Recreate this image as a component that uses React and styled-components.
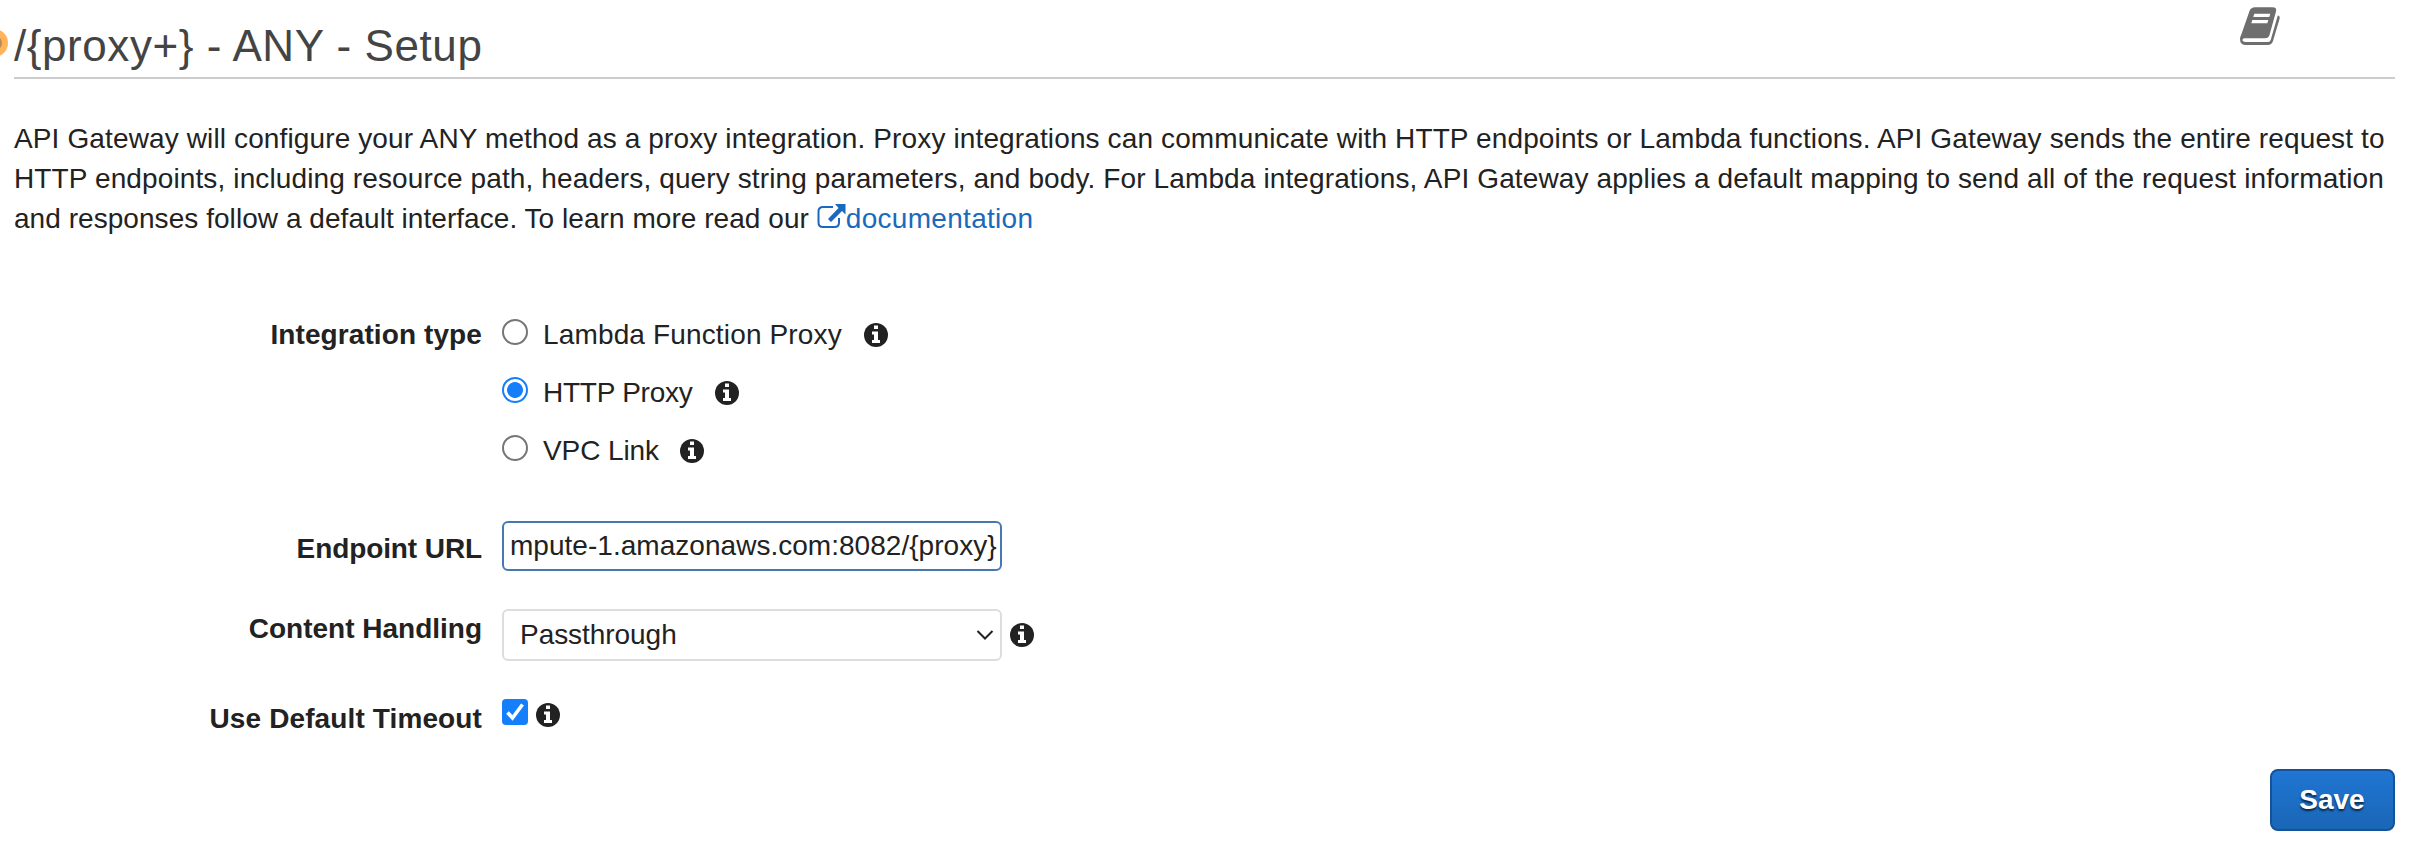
import React from "react";
import styled, { createGlobalStyle } from "styled-components";

const GlobalStyle = createGlobalStyle`
  * { box-sizing: border-box; }
  body {
    margin: 0;
    background: #fff;
    color: #222;
    font: 28px/40px "Liberation Sans", Arial, sans-serif;
    overflow: hidden;
  }
`;

const Page = styled.main`
  position: relative;
  height: 858px;
  padding: 18px 27px 0 14px;
  overflow: hidden;
`;

const StatusDot = styled.span`
  position: absolute;
  left: -20px;
  top: 29px;
  width: 28px;
  height: 28px;
  border-radius: 50%;
  border: 6px solid #ffb45c;
  background: #b98b52;
`;

const Header = styled.header`
  display: flex;
  justify-content: space-between;
  height: 61px;
  border-bottom: 2px solid #ccc;
`;

const Title = styled.h1`
  margin: 2px 0 0;
  font-size: 44px;
  line-height: 52px;
  font-weight: 400;
  color: #444;
  white-space: nowrap;
  letter-spacing: 0.57px;
`;

const BookIcon = styled.svg`
  width: 42px;
  height: 40px;
  margin: -12px 114px 0 0;
`;

const Intro = styled.p`
  margin: 40px 0 0;
`;

const Line = styled.span`
  display: block;
  white-space: nowrap;
  letter-spacing: ${(p) => p.$spacing || 0}px;
`;

const DocLink = styled.a`
  color: #1a69bc;
  text-decoration: none;
  letter-spacing: 0.3px;
`;

const ExternalIcon = styled.svg`
  width: 29px;
  height: 25px;
  vertical-align: -1px;
`;

const Form = styled.form`
  display: flex;
  flex-direction: column;
  margin-top: 76px;
`;

const Field = styled.div`
  display: grid;
  grid-template-columns: 468px auto;
  column-gap: 20px;
  justify-content: start;
  align-items: start;
  height: ${(p) => p.$height}px;
`;

const Label = styled.label`
  padding-top: ${(p) => p.$top || 0}px;
  text-align: right;
  font-weight: 700;
  white-space: nowrap;
  letter-spacing: ${(p) => p.$spacing || 0}px;
`;

const Options = styled.div`
  display: flex;
  flex-direction: column;
`;

const Option = styled.label`
  display: flex;
  height: 58px;
  align-items: flex-start;
`;

const Radio = styled.input`
  appearance: none;
  flex: none;
  width: 26px;
  height: 26px;
  margin: 4px 15px 0 0;
  border: 2px solid #767676;
  border-radius: 50%;
  background: #fff;
  &:checked {
    border-color: #157efb;
    background: radial-gradient(circle, #157efb 7.5px, #fff 8.3px);
  }
`;

const OptionText = styled.span`
  width: ${(p) => p.$width}px;
  white-space: nowrap;
  letter-spacing: ${(p) => p.$spacing || 0}px;
`;

const InfoSvg = styled.svg`
  flex: none;
  width: 24px;
  height: 24px;
  margin: ${(p) => p.$top}px 0 0 ${(p) => p.$left || 0}px;
`;

const Controls = styled.div`
  display: flex;
  align-items: flex-start;
`;

const TextInput = styled.input`
  width: 500px;
  height: 50px;
  padding: 0 0 0 6px;
  border: 2px solid #4679b2;
  border-radius: 6px;
  outline: none;
  color: #222;
  background: #fff;
  font: inherit;
  letter-spacing: 0.03px;
`;

const SelectBox = styled.button`
  display: flex;
  align-items: center;
  justify-content: space-between;
  width: 500px;
  height: 52px;
  padding: 0 6px 0 16px;
  border: 2px solid #ddd;
  border-radius: 6px;
  color: #222;
  background: #fff;
  font: inherit;
  letter-spacing: -0.05px;
`;

const Chevron = styled.svg`
  width: 18px;
  height: 12px;
`;

const CheckBox = styled.span`
  display: flex;
  width: 26px;
  height: 26px;
  border-radius: 4px;
  background: #157efb;
`;

const Actions = styled.div`
  display: flex;
  justify-content: flex-end;
`;

const SaveButton = styled.button`
  width: 125px;
  height: 62px;
  padding: 0 1px 0 0;
  border: 2px solid #14529a;
  border-radius: 8px;
  color: #fff;
  background: linear-gradient(#1f76d3, #1a66b6);
  font: 700 28px/40px "Liberation Sans", Arial, sans-serif;
  text-shadow: 0 2px 2px rgba(0, 0, 0, 0.65);
`;

function Info({ top, left }) {
  return (
    <InfoSvg viewBox="0 0 24 24" $top={top} $left={left}>
      <circle cx="12" cy="12" r="12" fill="#222" />
      <path d="M10 2.500h4v3.500h-4zM8 8.500h6v8.500h2v3H8v-3h2v-5.500H8z" fill="#fff" />
    </InfoSvg>
  );
}

export default function App() {
  return (
    <Page>
      <GlobalStyle />
      <StatusDot />
      <Header>
        <Title>{"/{proxy+} - ANY - Setup"}</Title>
        <BookIcon viewBox="0 0 42 40">
          <path
            d="M16 1.300H33.500Q38 1.300 37 5.500L30.500 29Q29.500 32.300 26 32.300H5.500Q3.400 32.300 3.400 34.200Q3.700 36 6.500 36H29Q31 36 31.700 34L38.800 9.500Q41.300 9.800 40.500 13L34 35Q32.800 39 28.500 39H7Q1 39 1 33Q1 31 2.500 28L10.500 5Q12 1.300 16 1.300Z"
            fill="#6e6e6e"
          />
          <path d="M15.300 7.700H31.300L30.300 11H14.300ZM13.300 14H29.300L28.300 17.200H12.300Z" fill="#fff" />
        </BookIcon>
      </Header>
      <Intro>
        <Line $spacing={0.127}>
          API Gateway will configure your ANY method as a proxy integration. Proxy integrations can communicate with
          HTTP endpoints or Lambda functions. API Gateway sends the entire request to
        </Line>
        <Line $spacing={0.12}>
          HTTP endpoints, including resource path, headers, query string parameters, and body. For Lambda
          integrations, API Gateway applies a default mapping to send all of the request information
        </Line>
        <Line $spacing={0.05}>
          and responses follow a default interface. To learn more read our{" "}
          <DocLink href="#">
            <ExternalIcon viewBox="0 0 29 25">
              <path d="M16 3H6Q1.500 3 1.500 7.500V18.500Q1.500 23 6 23H17.500Q22 23 22 18.500V14" fill="none" stroke="currentColor" strokeWidth="2" />
              <path d="M18 0H28.500V10.500L25 7L14 18L11 15L21.500 4Z" fill="currentColor" />
            </ExternalIcon>
            documentation
          </DocLink>
        </Line>
      </Intro>
      <Form onSubmit={(e) => e.preventDefault()}>
        <Field $height={206}>
          <Label $spacing={0.1}>Integration type</Label>
          <Options>
            <Option>
              <Radio type="radio" name="integration" />
              <OptionText $width={321} $spacing={0.15}>Lambda Function Proxy</OptionText>
              <Info top={8} />
            </Option>
            <Option>
              <Radio type="radio" name="integration" defaultChecked />
              <OptionText $width={172} $spacing={-0.25}>HTTP Proxy</OptionText>
              <Info top={8} />
            </Option>
            <Option>
              <Radio type="radio" name="integration" />
              <OptionText $width={137} $spacing={-0.1}>VPC Link</OptionText>
              <Info top={8} />
            </Option>
          </Options>
        </Field>
        <Field $height={88}>
          <Label $top={8} $spacing={-0.1}>Endpoint URL</Label>
          <TextInput defaultValue="mpute-1.amazonaws.com:8082/{proxy}" />
        </Field>
        <Field $height={90}>
          <Label>Content Handling</Label>
          <Controls>
            <SelectBox type="button">
              Passthrough
              <Chevron viewBox="0 0 18 12">
                <path d="M1.500 2L9 9.500L16.500 2" fill="none" stroke="#222" strokeWidth="2" />
              </Chevron>
            </SelectBox>
            <Info top={14} left={7.5} />
          </Controls>
        </Field>
        <Field $height={70}>
          <Label $spacing={0.12}>Use Default Timeout</Label>
          <Controls>
            <CheckBox role="checkbox" aria-checked="true">
              <svg width="26" height="26" viewBox="0 0 26 26">
                <path d="M5.500 13.500L10.500 19L20.500 5.500" fill="none" stroke="#fff" strokeWidth="3.600" />
              </svg>
            </CheckBox>
            <Info top={4} left={7.5} />
          </Controls>
        </Field>
        <Actions>
          <SaveButton type="submit">Save</SaveButton>
        </Actions>
      </Form>
    </Page>
  );
}
